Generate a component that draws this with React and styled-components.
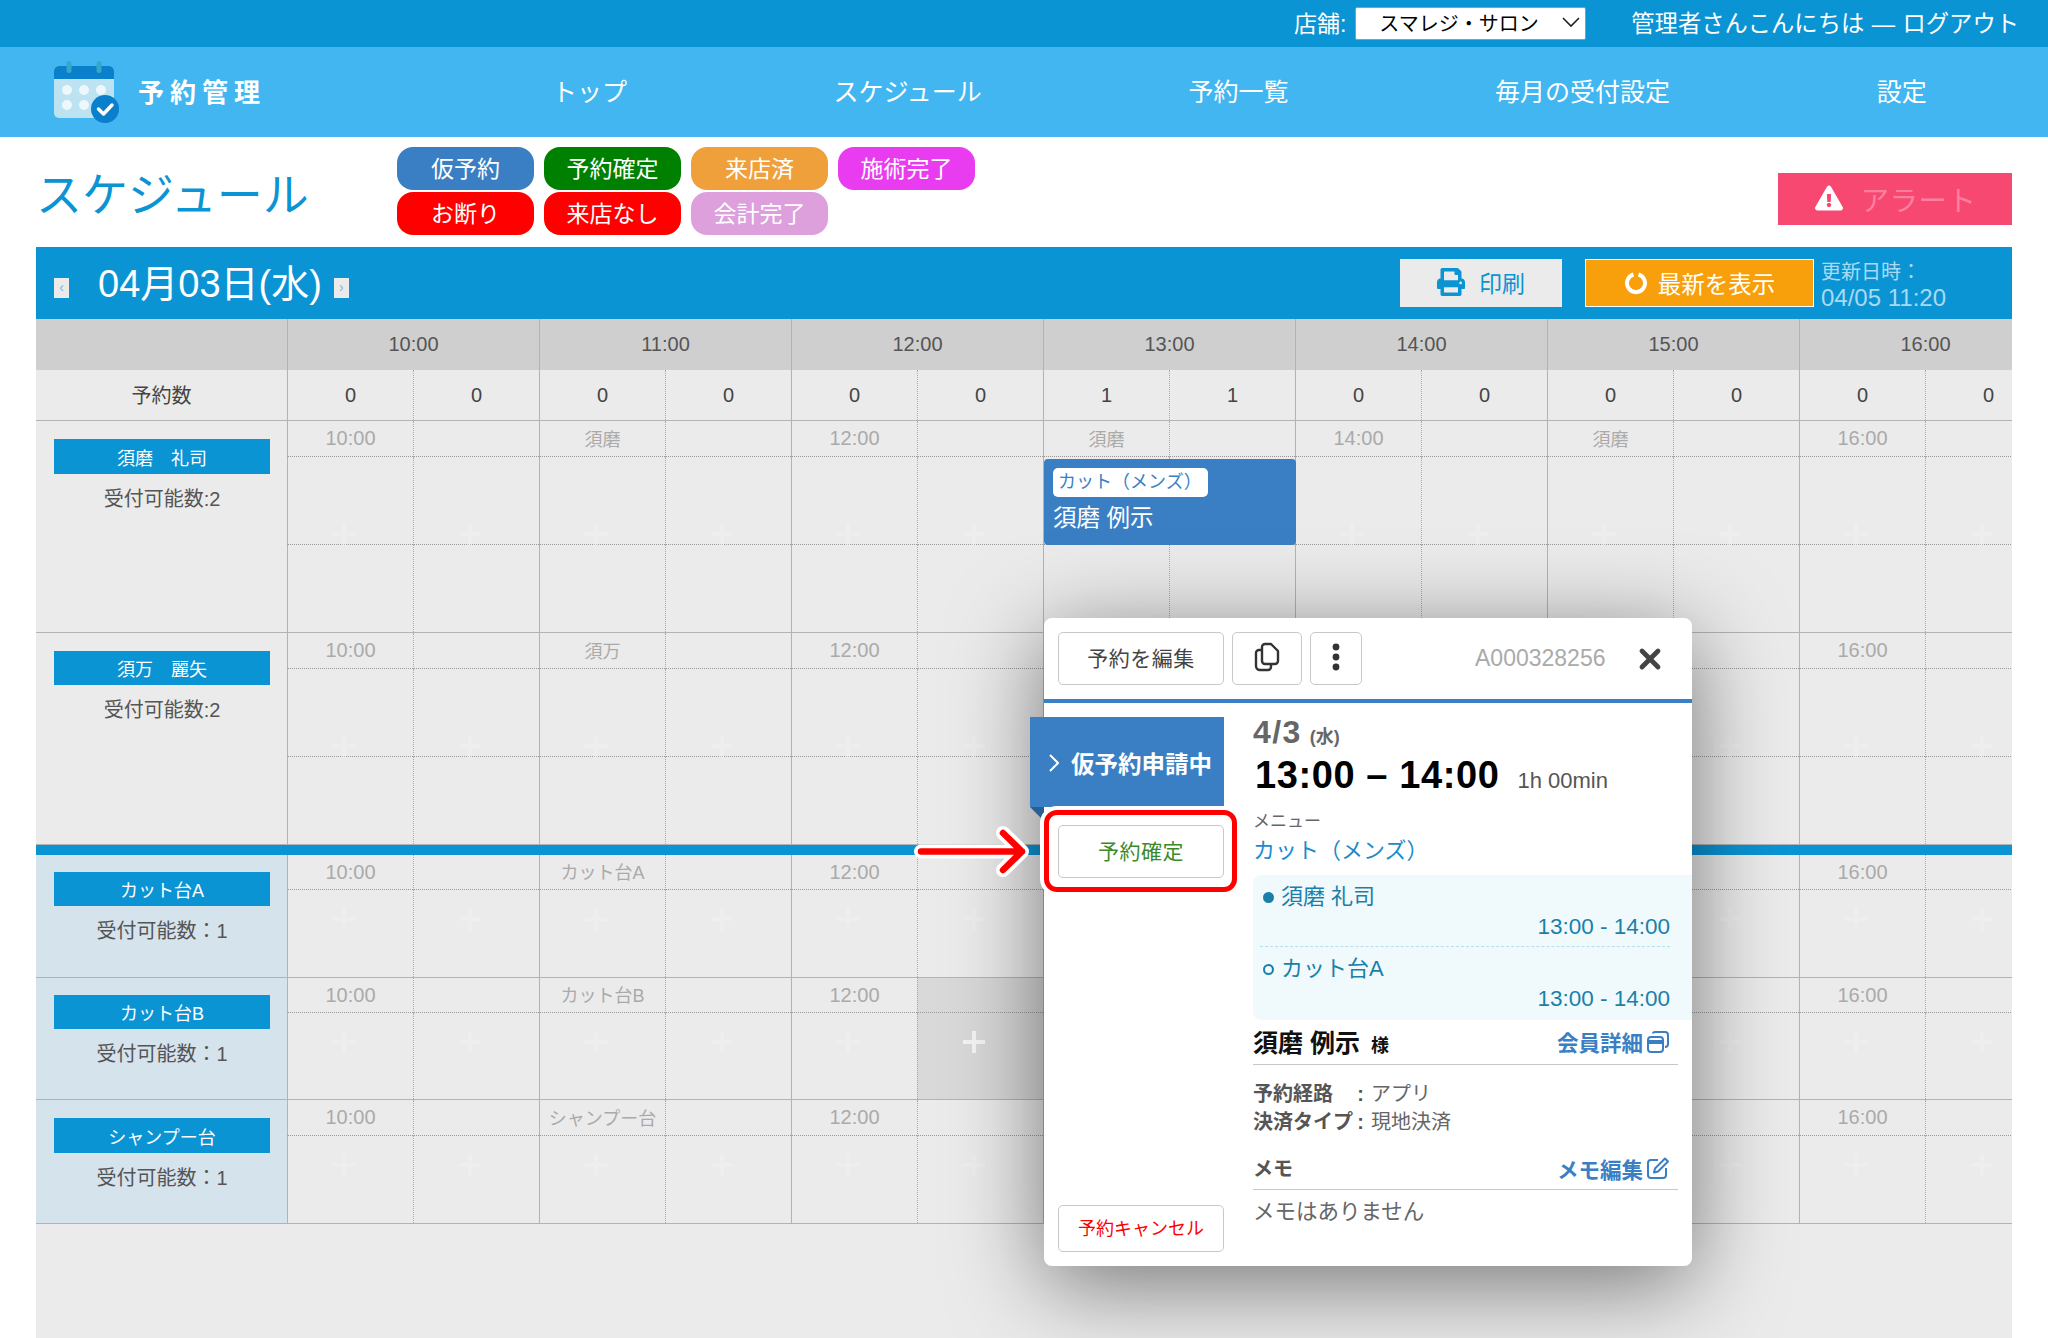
import React from 'react';
import styled, { createGlobalStyle } from 'styled-components';
import { FaPrint, FaExclamationTriangle } from 'react-icons/fa';
import { X } from 'lucide-react';

const Global = createGlobalStyle`
  html, body { margin: 0; padding: 0; background: #fff; }
  * { box-sizing: border-box; }
  body { font-family: "Liberation Sans", "Noto Sans CJK JP", sans-serif; color: #555; }
`;

const Page = styled.div`
  position: relative; width: 2048px; height: 1338px; overflow: hidden;
  display: flex; flex-direction: column;
`;
const TopBar = styled.header`
  height: 47px; background: #0a94d4; color: #fff; font-size: 23px; padding: 0 29px 3px 0;
  display: flex; align-items: center; justify-content: flex-end; flex-shrink: 0;
`;
const StoreLabel = styled.span`margin-right: 9px;`;
const StoreSelect = styled.div`
  width: 231px; height: 33px; background: #fff; border: 1px solid #999; border-radius: 2px; margin-top: 3px;
  color: #000; font-size: 20px; display: flex; align-items: center; justify-content: space-between;
  padding: 0 4px 3px 23px; margin-right: 45px;
`;
const Greeting = styled.span`white-space: nowrap; font-size: 23.300px; word-spacing: 1px;`;
const NavBar = styled.nav`
  height: 90px; background: #42b6f0; color: #fff; display: flex; align-items: center; padding-left: 52px; flex-shrink: 0;
`;
const BrandMark = styled.svg`width: 68px; height: 68px; display: block;`;
const BrandName = styled.span`font-size: 26px; font-weight: 700; letter-spacing: 6px; margin-left: 18px; white-space: nowrap; width: 142px; padding-bottom: 4px;`;
const NavList = styled.div`display: flex; gap: 206.600px; margin-left: 272px; font-size: 25px; white-space: nowrap; padding-bottom: 4px;`;
const NavItem = styled.span``;
const TitleRow = styled.section`
  height: 110px; padding: 10px 36px 0 36px; display: flex; flex-shrink: 0;
`;
const Title = styled.h1`
  margin: 0; font-size: 46px; font-weight: 400; color: #0a94d4; width: 361px; padding-top: 19px; line-height: 1.3; white-space: nowrap;
`;
const Pills = styled.div`
  display: grid; grid-template-columns: repeat(4, 137px); grid-auto-rows: 43px; column-gap: 10px; row-gap: 2px; align-content: start;
`;
const Pill = styled.div`
  background: ${p => p.$c}; color: #fff; font-size: 23px; border-radius: 16px; display: flex; align-items: center; justify-content: center; padding-bottom: 3px;
`;
const Alert = styled.div`
  margin-left: auto; margin-top: 26px; width: 234px; height: 52px; background: #f64870; color: #ff7f9f; font-size: 28.500px; padding: 0 3px 2px 5px;
  display: flex; align-items: center; justify-content: center; gap: 17px; letter-spacing: .5px;
  svg { color: #fff; width: 28px; height: 28px; }
`;
const Main = styled.main`
  flex: 1; margin: 0 36px; display: flex; flex-direction: column; background: #ebebeb; overflow: hidden; position: relative;
`;
const Band = styled.div`
  height: 72px; background: #0a94d4; display: flex; align-items: center; padding-left: 18px; flex-shrink: 0; color: #fff;
`;
const Step = styled.span`
  width: 15px; height: 20px; background: #ebebeb; color: #7db3db; font-size: 14px; line-height: 18px; text-align: center; display: block; margin-top: 10px;
`;
const DateText = styled.span`font-size: 38px; margin: 0 12px 0 29px; padding-top: 1px; white-space: nowrap; line-height: 1;`;
const PrintButton = styled.div`
  margin-left: auto; width: 162px; height: 48px; background: #ebebeb; color: #0a94d4; font-size: 23px; padding-bottom: 2px;
  display: flex; align-items: center; justify-content: center; gap: 14px;
  svg { width: 28px; height: 28px; }
`;
const RefreshButton = styled.div`
  margin-left: 23px; width: 229px; height: 48px; background: #f8a00c; border: 1px solid #fff; color: #fff; font-size: 23.500px;
  display: flex; align-items: center; justify-content: center; gap: 10px; padding-bottom: 1px;
`;
const Updated = styled.div`
  width: 198px; padding: 5px 0 0 7px; font-size: 20px; line-height: 26px; color: #a8daf3;
`;
const UpdatedStamp = styled.span`font-size: 24px;`;
const HeaderRow = styled.div`
  display: grid; grid-template-columns: 251px repeat(7, 252px); height: 51px; background: #cfcfcf; flex-shrink: 0;
`;
const HeadCell = styled.div`
  border-left: ${p => (p.$first ? 'none' : '1px solid #b3b3b3')}; font-size: 20px; color: #555;
  display: flex; align-items: center; justify-content: center;
`;
const CountRow = styled.div`
  display: grid; grid-template-columns: 251px repeat(14, 126px); height: 51px; border-bottom: 1px solid #b3b3b3; flex-shrink: 0;
`;
const CountCell = styled.div`
  font-size: 20px; color: #444; display: flex; align-items: center; justify-content: center;
  ${p => (p.$first ? 'padding-bottom: 2px;' : p.$half ? 'border-left: 1px dotted #aaa;' : 'border-left: 1px solid #b3b3b3;')}
`;
const StaffRow = styled.div`
  position: relative; display: grid; flex-shrink: 0; border-bottom: 1px solid #b3b3b3;
  grid-template-columns: 251px repeat(14, 126px);
  grid-template-rows: ${p => p.$rows};
`;
const LabelCell = styled.div`
  grid-row: 1 / -1; background: ${p => (p.$seat ? '#d5e3ed' : '#ebebeb')}; padding: ${p => p.$top}px 17px 0 18px;
  display: flex; flex-direction: column; align-items: center;
`;
const NameChip = styled.div`
  width: 216px; height: ${p => p.$h}px; background: #0a94d4; color: #fff; font-size: 18px;
  display: flex; align-items: center; justify-content: center; flex-shrink: 0; white-space: pre;
`;
const Capacity = styled.div`font-size: 20px; color: #555; margin-top: 12px; line-height: 1.3;`;
const TimeCell = styled.div`
  font-size: ${p => (p.$time ? '20px' : '18px')}; color: #aaa; white-space: nowrap;
  background: ${p => (p.$hover ? '#d9d9d9' : 'transparent')}; padding-bottom: ${p => (p.$time ? 0 : 2)}px;
  border-left: 1px ${p => (p.$half ? 'dotted #aaa' : 'solid #b3b3b3')}; border-bottom: 1px dotted #999;
  display: flex; align-items: center; justify-content: center;
`;
const SlotCell = styled.div`
  position: relative;
  background: ${p => (p.$hover ? '#d9d9d9' : 'transparent')};
  border-left: 1px ${p => (p.$half ? 'dotted #aaa' : 'solid #b3b3b3')};
  ${p => (p.$rule ? 'border-bottom: 1px dotted #999;' : '')}
`;
const Plus = styled.span`
  position: absolute; left: 50%; top: ${p => p.$top}px; width: 22px; height: 22px; margin-left: -18px; opacity: ${p => (p.$strong ? 1 : 0.4)};
  color: #f4f4f4;
  &::before { content: ''; position: absolute; left: 9px; top: 0; width: 4px; height: 22px; background: currentColor; }
  &::after { content: ''; position: absolute; left: 0; top: 9px; width: 22px; height: 4px; background: currentColor; }
`;
const BlueRule = styled.div`height: 10px; background: #0a94d4; flex-shrink: 0;`;
const EventCard = styled.div`
  position: absolute; left: 1008px; top: 38px; width: 252px; height: 86px; background: #3a7fc4; border-radius: 4px;
  padding: 9px 9px 0; color: #fff;
`;
const EventMenu = styled.div`
  display: inline-block; background: #fff; color: #3a7fc4; font-size: 18px; line-height: 28px; height: 29px; padding: 0 6px 0 5px; border-radius: 5px; white-space: nowrap;
`;
const EventName = styled.div`font-size: 23.500px; margin-top: 2px;`;

const Modal = styled.aside`
  position: absolute; left: 1044px; top: 618px; width: 648px; height: 648px; background: #fff; border-radius: 8px;
  box-shadow: 0 18px 90px rgba(0,0,0,.5); display: flex; flex-direction: column;
`;
const ModalHead = styled.div`
  height: 85px; border-bottom: 4px solid #3a7fc4; padding: 14px 0 0 14px; display: flex; align-items: flex-start; flex-shrink: 0;
`;
const Btn = styled.div`
  height: 53px; width: ${p => p.$w}px; margin-right: ${p => p.$mr || 0}px; flex-shrink: 0; padding-bottom: 4px;
  background: #fff; border: 1px solid #c8c8c8; border-radius: 5px; font-size: 21px; color: ${p => p.$c || '#444'};
  display: flex; align-items: center; justify-content: center; letter-spacing: .5px;
`;
const BookingId = styled.span`margin-left: 113px; margin-top: 13px; font-size: 23px; color: #aaa; line-height: 26px; width: 159px;`;
const CloseX = styled(X)`margin-top: 11px; color: #444;`;
const ModalBody = styled.div`flex: 1; display: flex; min-height: 0;`;
const LeftCol = styled.div`
  width: 209px; padding: 14px 0 14px 14px; display: flex; flex-direction: column; flex-shrink: 0;
`;
const StatusTag = styled.div`
  position: relative; margin-left: -28px; width: 194px; height: 90px; background: #3a7fc4; color: #fff; font-size: 23.500px; font-weight: 700;
  display: flex; align-items: center; padding: 1px 0 0 19px; gap: 12px; white-space: nowrap;
  &::after { content: ''; position: absolute; left: 0; top: 100%; border-top: 14px solid #2a5f94; border-left: 14px solid transparent; }
`;
const ConfirmBtn = styled(Btn)`margin-top: 18px;`;
const CancelBtn = styled(Btn)`margin-top: auto; height: 47px; font-size: 18px; letter-spacing: 0; padding-bottom: 3px;`;
const RightCol = styled.div`flex: 1; padding-top: 12px; min-width: 0;`;
const DateLine = styled.div`color: #666; font-weight: 700; font-size: 32px; line-height: 34px; letter-spacing: 1.400px;`;
const Dow = styled.span`font-size: 18px; margin-left: 8px; letter-spacing: 0;`;
const TimeLine = styled.div`color: #000; display: flex; align-items: baseline; font-size: 38px; font-weight: 700; line-height: 46px; margin-top: -2px; padding-left: 2px; white-space: nowrap; letter-spacing: .6px;`;
const Duration = styled.span`font-size: 22px; font-weight: 400; color: #555; margin-left: 18px; letter-spacing: 0;`;
const MenuLabel = styled.div`font-size: 17px; color: #666; margin-top: 6px; line-height: 24px;`;
const MenuName = styled.div`font-size: 22px; color: #1a8ccc; line-height: 30px; margin-top: 2px;`;
const Assign = styled.div`
  margin-top: 9px; background: #f0fafd; border-radius: 8px 0 0 8px; padding: 6px 22px 0 7px; height: 145px; color: #1a80aa;
`;
const AssignRow = styled.div`
  ${p => (p.$rule ? 'border-bottom: 1px dashed #b5dfee;' : '')} height: ${p => (p.$rule ? 66 : 72)}px; padding-top: ${p => (p.$rule ? 0 : 6)}px;
`;
const AssignName = styled.div`display: flex; align-items: center; gap: 7px; font-size: 22px; line-height: 32px;  padding-left: 3px;`;
const Dot = styled.span`
  width: 11px; height: 11px; border-radius: 50%; flex-shrink: 0; border: 2px solid #1a80aa; background: ${p => (p.$on ? '#1a80aa' : 'transparent')};
`;
const AssignTime = styled.div`font-size: 22.500px; text-align: right; line-height: 28px;`;
const SectionHead = styled.div`
  margin-right: 14px; height: ${p => p.$h}px; margin-top: ${p => p.$mt}px; border-bottom: 1px solid #c8c8c8; display: flex; align-items: center; justify-content: space-between; padding-right: 9px; padding-bottom: 2px;
`;
const Customer = styled.span`font-size: 25px; font-weight: 700; color: #111; `;
const Honor = styled.span`font-size: 18px; margin-left: 11px;`;
const LinkText = styled.span`font-size: 21.500px; font-weight: 700; color: #3a7fc4; display: flex; align-items: center; gap: 4px; padding-top: 1px;`;
const InfoList = styled.div`margin-top: 15px; font-size: 20px; line-height: 28px; color: #666;`;
const InfoRow = styled.div`display: flex;`;
const InfoKey = styled.span`width: 118px; font-weight: 700; color: #555; display: flex; justify-content: space-between; padding-right: 7px;`;
const MemoTitle = styled.span`font-size: 20px; font-weight: 700; color: #555;`;
const MemoBody = styled.div`font-size: 21.500px; color: #666; margin-top: 7px; line-height: 30px;`;

const Highlight = styled.div`
  position: absolute; left: 1044px; top: 810px; width: 193px; height: 82px; border: 5px solid #f00; border-radius: 13px;
  box-shadow: 0 0 0 4px #fff;
`;
const ArrowMark = styled.svg`position: absolute; left: 900px; top: 820px; width: 140px; height: 64px;`;

const hours = ['10:00', '11:00', '12:00', '13:00', '14:00', '15:00', '16:00'];
const counts = [0, 0, 0, 0, 0, 0, 1, 1, 0, 0, 0, 0, 0, 0];
const pills = [
  ['仮予約', '#3a7fc4'], ['予約確定', '#008000'], ['来店済', '#f0a03a'], ['施術完了', '#e93cf0'],
  ['お断り', '#f00'], ['来店なし', '#f00'], ['会計完了', '#dda0dd'],
];
const staff = [
  { name: '須磨　礼司', short: '須磨', cap: '受付可能数:2', rows: '36px 88px 87px', slots: 2, plusTop: 66, top: 18, chip: 35 },
  { name: '須万　麗矢', short: '須万', cap: '受付可能数:2', rows: '36px 88px 87px', slots: 2, plusTop: 66, top: 18, chip: 34 },
];
const seats = [
  { name: 'カット台A', short: 'カット台A', cap: '受付可能数：1', rows: '35px 87px', plusTop: 18, top: 17, chip: 34 },
  { name: 'カット台B', short: 'カット台B', cap: '受付可能数：1', rows: '35px 86px', plusTop: 18, hover: 5, top: 17, chip: 34 },
  { name: 'シャンプー台', short: 'シャンプー台', cap: '受付可能数：1', rows: '36px 87px', plusTop: 18, top: 18, chip: 35 },
];
const cols = Array.from({ length: 14 }, (_, i) => i);

function Row({ r, seat, children }) {
  return (
    <StaffRow $rows={r.rows}>
      <LabelCell $seat={seat} $top={r.top}>
        <NameChip $h={r.chip}>{r.name}</NameChip>
        <Capacity>{r.cap}</Capacity>
      </LabelCell>
      {cols.map(i => {
        const even = i % 2 === 0;
        const text = !even ? '' : i % 4 === 0 ? hours[i / 2] : r.short;
        return <TimeCell key={i} $half={!even} $time={i % 4 === 0} $hover={r.hover === i}>{text}</TimeCell>;
      })}
      {cols.map(i => (
        <SlotCell key={i} $half={i % 2 === 1} $rule={r.slots === 2} $hover={r.hover === i}>
          <Plus $top={r.plusTop} $strong={r.hover === i} />
        </SlotCell>
      ))}
      {r.slots === 2 && cols.map(i => <SlotCell key={i} $half={i % 2 === 1} />)}
      {children}
    </StaffRow>
  );
}

export default function App() {
  return (
    <Page>
      <Global />
      <TopBar>
        <StoreLabel>店舗:</StoreLabel>
        <StoreSelect>
          スマレジ・サロン
          <svg width="20" height="12" viewBox="0 0 20 12" fill="none" stroke="#222" strokeWidth="1.6"><path d="M2 2l8 8 8-8" /></svg>
        </StoreSelect>
        <Greeting>管理者さんこんにちは — ログアウト</Greeting>
      </TopBar>
      <NavBar>
        <BrandMark viewBox="52 58 68 68">
          <rect x="54" y="66" width="60" height="52" rx="5" fill="#bde3f2" />
          <path d="M54 79v-8a5 5 0 0 1 5-5h50a5 5 0 0 1 5 5v8z" fill="#0a7fcb" />
          <rect x="66.500" y="61" width="5" height="12" rx="2.500" fill="#35a8c9" />
          <rect x="96.500" y="61" width="5" height="12" rx="2.500" fill="#35a8c9" />
          {[[67, 90], [84, 90], [101, 90], [67, 105], [84, 105]].map(([x, y]) => <circle key={x + '-' + y} cx={x} cy={y} r="5" fill="#eef8fc" />)}
          <circle cx="105" cy="109" r="14" fill="#0a7fcb" />
          <path d="M98.500 109l5 5 8.500-9" fill="none" stroke="#fff" strokeWidth="3.500" strokeLinecap="round" strokeLinejoin="round" />
        </BrandMark>
        <BrandName>予約管理</BrandName>
        <NavList>
          {['トップ', 'スケジュール', '予約一覧', '毎月の受付設定', '設定'].map(t => <NavItem key={t}>{t}</NavItem>)}
        </NavList>
      </NavBar>
      <TitleRow>
        <Title>スケジュール</Title>
        <Pills>{pills.map(([t, c]) => <Pill key={t} $c={c}>{t}</Pill>)}</Pills>
        <Alert><FaExclamationTriangle />アラート</Alert>
      </TitleRow>
      <Main>
        <Band>
          <Step>‹</Step>
          <DateText>04月03日(水)</DateText>
          <Step>›</Step>
          <PrintButton><FaPrint />印刷</PrintButton>
          <RefreshButton>
            <svg width="24" height="24" viewBox="0 0 24 24" fill="none" stroke="#fff" strokeWidth="4"><path d="M14.500 3.500a9 9 0 1 1-5 0" /></svg>
            最新を表示
          </RefreshButton>
          <Updated>更新日時：<br /><UpdatedStamp>04/05 11:20</UpdatedStamp></Updated>
        </Band>
        <HeaderRow>
          <HeadCell $first />
          {hours.map(h => <HeadCell key={h}>{h}</HeadCell>)}
        </HeaderRow>
        <CountRow>
          <CountCell $first>予約数</CountCell>
          {counts.map((c, i) => <CountCell key={i} $half={i % 2 === 1}>{c}</CountCell>)}
        </CountRow>
        <Row r={staff[0]}>
          <EventCard>
            <EventMenu>カット（メンズ）</EventMenu>
            <EventName>須磨 例示</EventName>
          </EventCard>
        </Row>
        <Row r={staff[1]} />
        <BlueRule />
        {seats.map(r => <Row key={r.name} r={r} seat />)}
      </Main>
      <Modal>
        <ModalHead>
          <Btn $w={166} $mr={8}>予約を編集</Btn>
          <Btn $w={70} $mr={8}>
            <svg width="26" height="30" viewBox="0 0 26 30" fill="none" stroke="#333" strokeWidth="2.400" strokeLinejoin="round"><path d="M8 5a3 3 0 0 1 3-3h6l7 7v10a3 3 0 0 1-3 3H11a3 3 0 0 1-3-3z" /><path d="M8 8H5a3 3 0 0 0-3 3v13a4 4 0 0 0 4 4h8a3 3 0 0 0 3-3v-3" /></svg>
          </Btn>
          <Btn $w={52}>
            <svg width="8" height="28" viewBox="0 0 8 28" fill="#333"><circle cx="4" cy="4" r="3.400" /><circle cx="4" cy="14" r="3.400" /><circle cx="4" cy="24" r="3.400" /></svg>
          </Btn>
          <BookingId>A000328256</BookingId>
          <CloseX size={32} strokeWidth={3.6} />
        </ModalHead>
        <ModalBody>
          <LeftCol>
            <StatusTag>
              <svg width="10" height="18" viewBox="0 0 10 18" fill="none" stroke="#fff" strokeWidth="2"><path d="M1 1l8 8-8 8" /></svg>
              仮予約申請中
            </StatusTag>
            <ConfirmBtn $w={166} $c="#3a8a2a">予約確定</ConfirmBtn>
            <CancelBtn $w={166} $c="#f00">予約キャンセル</CancelBtn>
          </LeftCol>
          <RightCol>
            <DateLine>4/3<Dow>(水)</Dow></DateLine>
            <TimeLine>13:00 – 14:00<Duration>1h 00min</Duration></TimeLine>
            <MenuLabel>メニュー</MenuLabel>
            <MenuName>カット（メンズ）</MenuName>
            <Assign>
              <AssignRow $rule>
                <AssignName><Dot $on />須磨 礼司</AssignName>
                <AssignTime>13:00 - 14:00</AssignTime>
              </AssignRow>
              <AssignRow>
                <AssignName><Dot />カット台A</AssignName>
                <AssignTime>13:00 - 14:00</AssignTime>
              </AssignRow>
            </Assign>
            <SectionHead $h={45} $mt={0}>
              <Customer>須磨 例示<Honor>様</Honor></Customer>
              <LinkText>会員詳細
                <svg width="22" height="22" viewBox="0 0 22 22" fill="none" stroke="#3a7fc4" strokeWidth="2"><rect x="1" y="6" width="15" height="15" rx="3" /><path d="M1 11h15" strokeWidth="4" /><path d="M6 2.500Q6 1 8 1h10q3 0 3 3v9q0 3-3 3" /></svg>
              </LinkText>
            </SectionHead>
            <InfoList>
              <InfoRow><InfoKey>予約経路<span>:</span></InfoKey>アプリ</InfoRow>
              <InfoRow><InfoKey>決済タイプ<span>:</span></InfoKey>現地決済</InfoRow>
            </InfoList>
            <SectionHead $h={42} $mt={12}>
              <MemoTitle>メモ</MemoTitle>
              <LinkText>メモ編集
                <svg width="22" height="22" viewBox="0 0 22 22" fill="none" stroke="#3a7fc4" strokeWidth="2" strokeLinejoin="round"><path d="M11 3H4a3 3 0 0 0-3 3v12a3 3 0 0 0 3 3h12a3 3 0 0 0 3-3v-7" /><path d="M18 1.500l3 3L11 14.500l-4 1 1-4z" /></svg>
              </LinkText>
            </SectionHead>
            <MemoBody>メモはありません</MemoBody>
          </RightCol>
        </ModalBody>
      </Modal>
      <Highlight />
      <ArrowMark viewBox="900 820 140 64">
        <g fill="none" strokeLinecap="round" strokeLinejoin="round">
          <path d="M921 851.500H1022M1003 833l19 18.500-19 18.500" stroke="#fff" strokeWidth="14" />
          <path d="M921 851.500H1022M1003 833l19 18.500-19 18.500" stroke="#f00" strokeWidth="6.500" />
        </g>
      </ArrowMark>
    </Page>
  );
}
